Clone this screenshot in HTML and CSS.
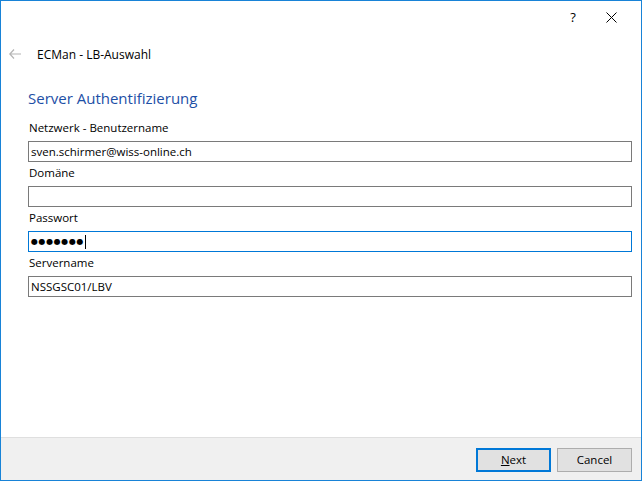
FILE: index.html
```html
<!DOCTYPE html>
<html lang="de">
<head>
<meta charset="utf-8">
<link rel="stylesheet" href="styles.css">
</head>
<body>
<div class="window">
  <div class="titlebar">
    <span class="help">?</span>
    <span class="close"><svg width="11" height="11" viewBox="0 0 11 11"><path d="M0.5 0.5L10.5 10.5M10.5 0.5L0.5 10.5" stroke="#000" stroke-width="1" fill="none"/></svg></span>
  </div>
  <div class="header">
    <svg class="back" width="12" height="10" viewBox="0 0 12 10"><path d="M5 0.5L0.8 5L5 9.5M0.8 5H12" stroke="#b4b4b4" stroke-width="1.2" fill="none"/></svg>
    <span class="apptitle">ECMan - LB-Auswahl</span>
  </div>
  <div class="content">
    <h1 class="instruction">Server Authentifizierung</h1>
    <div class="field">
      <label class="lbl">Netzwerk - Benutzername</label>
      <div class="input">sven.schirmer@wiss-online.ch</div>
    </div>
    <div class="field">
      <label class="lbl">Domäne</label>
      <div class="input"></div>
    </div>
    <div class="field">
      <label class="lbl">Passwort</label>
      <div class="input focus"><span class="dots">●●●●●●●</span><span class="caret"></span></div>
    </div>
    <div class="field">
      <label class="lbl">Servername</label>
      <div class="input">NSSGSC01/LBV</div>
    </div>
  </div>
  <div class="footer">
    <button class="btn default"><u>N</u>ext</button>
    <button class="btn">Cancel</button>
  </div>
</div>
</body>
</html>
```
FILE: styles.css
```css
html, body { margin: 0; padding: 0; }
body {
  width: 642px; height: 481px; overflow: hidden;
  font-family: "Open Sans", "Noto Sans", sans-serif;
  font-size: 11.5px; color: #000; background: #fff;
}
.window {
  box-sizing: border-box; width: 642px; height: 481px;
  border: 1px solid #1883d7;
  display: flex; flex-direction: column; background: #fff;
}
.titlebar {
  height: 31px; display: flex; justify-content: flex-end; align-items: center;
}
.help { width: 18px; text-align: center; font-size: 13px; margin-right: 24px; margin-top: 1px; }
.close { width: 12px; display: flex; margin-right: 23px; margin-top: 1px; }
.header {
  height: 46px; display: flex; align-items: center; padding-left: 8px;
}
.back { margin-right: 16px; margin-top: -2px; }
.apptitle { font-size: 12px; margin-top: -1px; }
.content { flex: 1; padding: 9px 9px 0 27px; }
.instruction {
  margin: 0 0 10px 0; font-weight: normal; font-size: 15px;
  color: #1d4fa6; line-height: 22px; height: 22px;
}
.field { display: flex; flex-direction: column; }
.lbl { height: 22px; line-height: 18px; padding-left: 1px; }
.input {
  box-sizing: border-box; height: 21px; margin-bottom: 2px;
  border: 1px solid #7a7a7a; padding: 0 2px; line-height: 19px;
  display: flex; align-items: center;
}
.input.focus { border-color: #0078d7; }
.dots { font-size: 8px; letter-spacing: 0.6px; font-family: "DejaVu Sans", sans-serif; }
.caret { display: inline-block; width: 1px; height: 14px; background: #000; margin-left: 1px; }
.footer {
  height: 42px; background: #f0f0f0; border-top: 1px solid #dfdfdf;
  display: flex; justify-content: flex-end; align-items: center; gap: 6px;
  padding-right: 9px;
}
.btn {
  box-sizing: border-box; width: 75px; height: 24px;
  font-family: inherit; font-size: 11.5px; color: #000;
  background: #e1e1e1; border: 1px solid #adadad; padding: 0; margin-top: 1px;
}
.btn.default { border: 2px solid #0078d7; }
```
